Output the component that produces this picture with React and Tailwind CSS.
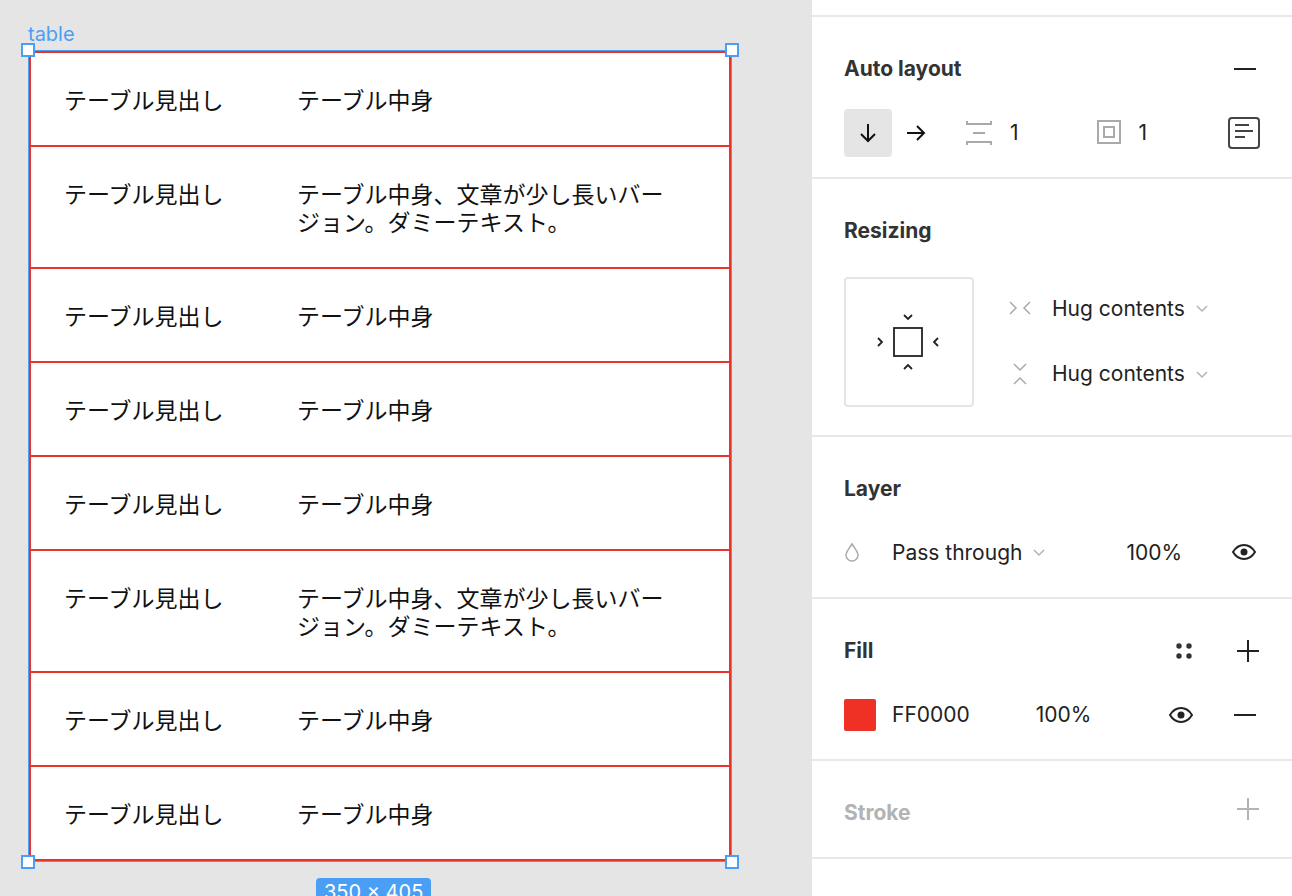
import React from 'react';

const rows = [
  'テーブル中身',
  'テーブル中身、文章が少し長いバージョン。ダミーテキスト。',
  'テーブル中身',
  'テーブル中身',
  'テーブル中身',
  'テーブル中身、文章が少し長いバージョン。ダミーテキスト。',
  'テーブル中身',
  'テーブル中身',
];

const jp = { fontFamily: '"Noto Sans CJK JP", sans-serif' };
const ui = { fontFamily: 'Inter, "Noto Sans", sans-serif' };

const Handle = ({ pos }) => (
  <div className={`absolute w-[14px] h-[14px] bg-white border-2 border-[#4a9ff5] ${pos}`} />
);

const Eye = () => (
  <svg width="26" height="18" viewBox="0 0 26 18" fill="none">
    <path d="M2 9c3-5 7-7 11-7s8 2 11 7c-3 5-7 7-11 7S5 14 2 9z" stroke="#222" strokeWidth="2" />
    <circle cx="13" cy="9" r="3.5" fill="#222" />
  </svg>
);

const Chevron = ({ c = '#b3b3b3' }) => (
  <svg width="14" height="10" viewBox="0 0 14 10"><path d="M2 3l5 5 5-5" stroke={c} strokeWidth="1.5" fill="none" /></svg>
);

export default function App() {
  return (
    <div className="flex w-[1292px] h-[896px] overflow-hidden bg-white" style={ui}>
      <div className="w-[812px] bg-[#e5e5e5] relative shrink-0">
        <div className="absolute left-[28px] top-[20px] text-[#4a9ff5] text-[20px] leading-[28px]">table</div>
        <div className="absolute left-[28px] top-[50px] w-[704px] border border-[#4a9ff5]">
          <div className="bg-white border-2 border-[#e8352b] flex flex-col" style={jp}>
            {rows.map((t, i) => (
              <div key={i} className={`flex py-8 pl-[33px] text-[23px] leading-[28px] text-[#111] ${i > 0 ? 'border-t-2 border-[#e8352b]' : ''}`}>
                <div className="w-[233px] shrink-0">テーブル見出し</div>
                <div className="w-[386px]">{t}</div>
              </div>
            ))}
          </div>
          <Handle pos="-left-[8px] -top-[8px]" />
          <Handle pos="-right-[8px] -top-[8px]" />
          <Handle pos="-left-[8px] -bottom-[8px]" />
          <Handle pos="-right-[8px] -bottom-[8px]" />
        </div>
        <div className="absolute left-[316px] top-[878px] bg-[#4a9ff5] text-white text-[20px] px-2 rounded-[4px] leading-[28px]">350 × 405</div>
      </div>

      <div className="flex-1 flex flex-col text-[21px] text-[#222]">
        <div className="h-[17px] border-b-2 border-[#e8e8e8]" />
        <div className="h-[162px] border-b-2 border-[#e8e8e8] px-8 pt-[36px]">
          <div className="flex justify-between items-center">
            <span className="font-bold text-[#333]">Auto layout</span>
            <div className="w-[22px] h-[2px] bg-[#222] mr-[4px]" />
          </div>
          <div className="flex items-center mt-[24px]">
            <div className="w-[48px] h-[48px] bg-[#e5e5e5] rounded-[4px] flex items-center justify-center">
              <svg width="20" height="22" viewBox="0 0 20 22"><path d="M10 2v17M3 12l7 7 7-7" stroke="#111" strokeWidth="2" fill="none" /></svg>
            </div>
            <div className="w-[48px] h-[48px] flex items-center justify-center">
              <svg width="22" height="20" viewBox="0 0 22 20"><path d="M2 10h17M12 3l7 7-7 7" stroke="#111" strokeWidth="2" fill="none" /></svg>
            </div>
            <svg className="ml-[26px]" width="26" height="26" viewBox="0 0 26 26"><path d="M1 1v3h24V1M7 13h12M1 25v-3h24v3" stroke="#aaa" strokeWidth="2" fill="none" /></svg>
            <span className="ml-[18px]">1</span>
            <svg className="ml-[78px]" width="26" height="26" viewBox="0 0 26 26"><rect x="1" y="1" width="22" height="22" stroke="#aaa" strokeWidth="2" fill="none" /><rect x="7" y="7" width="10" height="10" stroke="#aaa" strokeWidth="2" fill="none" /></svg>
            <span className="ml-[16px]">1</span>
            <div className="ml-auto w-[32px] h-[32px] border-2 border-[#444] rounded-[4px] flex flex-col gap-[4px] pt-[5px] pl-[5px]">
              <div className="w-[14px] h-[2px] bg-[#444]" />
              <div className="w-[18px] h-[2px] bg-[#444]" />
              <div className="w-[10px] h-[2px] bg-[#444]" />
            </div>
          </div>
        </div>
        <div className="h-[258px] border-b-2 border-[#e8e8e8] px-8 pt-[36px]">
          <div className="font-bold text-[#333]">Resizing</div>
          <div className="flex mt-[30px]">
            <div className="w-[130px] h-[130px] border-2 border-[#e5e5e5] rounded-[4px] flex items-center justify-center">
              <svg width="64" height="60" viewBox="0 0 64 60"><path d="M27 3l4 4 4-4M27 57l4-4 4 4M1 26l4 4-4 4M61 26l-4 4 4 4" stroke="#222" strokeWidth="1.8" fill="none" /><rect x="17" y="16" width="28" height="28" stroke="#222" strokeWidth="1.8" fill="none" /></svg>
            </div>
            <div className="flex flex-col ml-[34px] gap-[34px] pt-[16px]">
              <div className="flex items-center">
                <svg width="24" height="16" viewBox="0 0 24 16"><path d="M2 2l6 6-6 6M22 2l-6 6 6 6" stroke="#aaa" strokeWidth="1.5" fill="none" /></svg>
                <span className="ml-[20px]">Hug contents</span>
                <span className="ml-[10px]"><Chevron /></span>
              </div>
              <div className="flex items-center">
                <svg width="24" height="24" viewBox="0 0 24 24"><path d="M6 2l6 6 6-6M6 22l6-6 6 6" stroke="#aaa" strokeWidth="1.5" fill="none" /></svg>
                <span className="ml-[20px]">Hug contents</span>
                <span className="ml-[10px]"><Chevron /></span>
              </div>
            </div>
          </div>
        </div>
        <div className="h-[162px] border-b-2 border-[#e8e8e8] px-8 pt-[36px]">
          <div className="font-bold text-[#333]">Layer</div>
          <div className="flex items-center mt-[32px]">
            <svg width="16" height="20" viewBox="0 0 16 20"><path d="M8 2C5 7 2 10 2 13a6 6 0 0012 0c0-3-3-6-6-11z" stroke="#aaa" strokeWidth="1.5" fill="none" /></svg>
            <span className="ml-[32px]">Pass through</span>
            <span className="ml-[10px]"><Chevron /></span>
            <span className="ml-[80px]">100%</span>
            <span className="ml-auto mr-[3px]"><Eye /></span>
          </div>
        </div>
        <div className="h-[162px] border-b-2 border-[#e8e8e8] px-8 pt-[36px]">
          <div className="flex items-center justify-between">
            <span className="font-bold text-[#333]">Fill</span>
            <div className="flex items-center gap-[42px]">
              <svg width="20" height="20" viewBox="0 0 20 20" fill="#333"><circle cx="5" cy="5" r="2.7" /><circle cx="15" cy="5" r="2.7" /><circle cx="5" cy="15" r="2.7" /><circle cx="15" cy="15" r="2.7" /></svg>
              <svg width="24" height="24" viewBox="0 0 24 24"><path d="M12 1v22M1 12h22" stroke="#222" strokeWidth="2" /></svg>
            </div>
          </div>
          <div className="flex items-center mt-[32px]">
            <div className="w-[32px] h-[32px] bg-[#ee3124] rounded-[2px]" />
            <span className="ml-[16px]">FF0000</span>
            <span className="ml-[66px]">100%</span>
            <span className="ml-auto"><Eye /></span>
            <div className="w-[22px] h-[2px] bg-[#222] ml-[40px] mr-[4px]" />
          </div>
        </div>
        <div className="h-[98px] border-b-2 border-[#e8e8e8] px-8 pt-[36px] flex justify-between">
          <span className="font-bold text-[#b3b3b3]">Stroke</span>
          <svg width="24" height="24" viewBox="0 0 24 24"><path d="M12 1v22M1 12h22" stroke="#b3b3b3" strokeWidth="2" /></svg>
        </div>
      </div>
    </div>
  );
}
